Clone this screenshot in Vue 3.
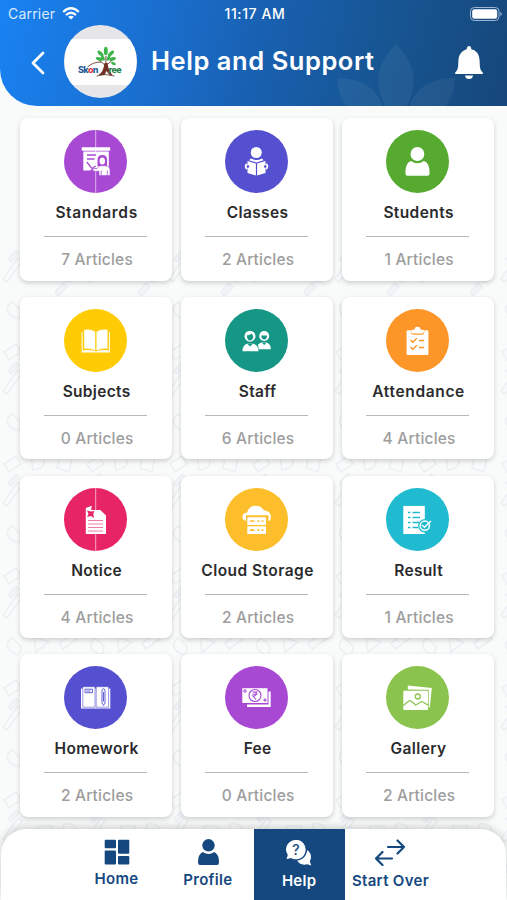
<script setup>
const topics = [
  { name: 'Standards', count: 7, color: '#a849d4', icon: 'standards', track: 0.65, split: true },
  { name: 'Classes', count: 2, color: '#5550d0', icon: 'classes', track: 0.35 },
  { name: 'Students', count: 1, color: '#56aa30', icon: 'students', track: 0.4 },
  { name: 'Subjects', count: 0, color: '#ffcb05', icon: 'subjects', track: 0.3 },
  { name: 'Staff', count: 6, color: '#169685', icon: 'staff', track: 0.35 },
  { name: 'Attendance', count: 4, color: '#fd9629', icon: 'attendance', track: 0.65 },
  { name: 'Notice', count: 4, color: '#e72566', icon: 'notice', track: 0.3, split: true },
  { name: 'Cloud Storage', count: 2, color: '#fcbf2b', icon: 'cloud', track: 0.45 },
  { name: 'Result', count: 1, color: '#20bbd0', icon: 'result', track: 0.3 },
  { name: 'Homework', count: 2, color: '#5550d0', icon: 'homework', track: 0.35 },
  { name: 'Fee', count: 0, color: '#a849d4', icon: 'fee', track: 0.3 },
  { name: 'Gallery', count: 2, color: '#8bc34f', icon: 'gallery', track: 0.4 },
]
</script>

<template>
  <div class="screen">
    <svg class="doodles" viewBox="0 0 507 900" aria-hidden="true">
      <defs>
        <pattern id="doodle" width="83" height="112" patternUnits="userSpaceOnUse">
          <g fill="none" stroke="#dfe6ee" stroke-width="1.6" opacity=".5">
            <path d="M4 16l12-8 5 8-12 8zM31 8q8-8 12 2t-10 12zM60 6l12 4-3 14-12-4zM3 55l15-21 4 3L7 58zM38 42h14v12H38zM64 40q14-2 12 10t-14 5zM12 78q-9 7 0 14t9-6zM34 77l15 5-13 10zM59 83l14-10 4 6-14 10zM30 103h12M58 102q6-8 12 0" />
            <path fill="#e9eff5" d="M8 35l8-9 3 3-8 9zM55 68l8-9 4 4-9 9zM47 102l5-8 3 8z" />
          </g>
        </pattern>
      </defs>
      <rect y="250" width="507" height="650" fill="url(#doodle)" />
    </svg>

    <header class="top">
      <svg class="lotus" viewBox="0 0 120 62" aria-hidden="true">
        <path d="M60 0C40 20 36 43 52 66h16C84 43 80 20 60 0zM1 34c24 0 41 10 47 32H14C5 58 2 48 1 34zM119 34c-24 0-41 10-47 32h34c9-8 12-18 13-32z" />
      </svg>
      <div class="status">
        <div class="carrier">
          <span>Carrier</span>
          <svg width="18" height="13" viewBox="0 0 18 13" fill="none" stroke="#fff" stroke-width="2.3">
            <path d="M1.2 5Q9-2.4 16.8 5M4 8Q9 3.6 14 8" />
            <path d="M9 12.5L6.1 9.8Q9 7.6 11.9 9.8z" fill="#fff" stroke="none" />
          </svg>
        </div>
        <span class="clock">11:17 AM</span>
        <svg class="battery" width="32" height="14" viewBox="0 0 32 14">
          <rect x=".5" y=".5" width="28.5" height="13" rx="3.8" fill="none" stroke="#9db6d3" />
          <rect x="2.2" y="2.2" width="25" height="9.6" rx="2.2" fill="#fff" />
          <path d="M30.3 5v4q1.4-.5 1.4-2t-1.4-2z" fill="#9db6d3" />
        </svg>
      </div>
      <div class="bar">
        <svg class="back" width="14" height="24" viewBox="0 0 14 24" fill="none" stroke="#fff" stroke-width="2.8" stroke-linecap="round" stroke-linejoin="round">
          <path d="M12 2L2 12l10 10" />
        </svg>
        <div class="logo">
          <svg width="72" height="46" viewBox="0 0 72 46">
            <rect width="72" height="46" fill="#fff" />
            <g fill="#3db54a">
              <ellipse cx="41.3" cy="12" rx="2" ry="4.3" />
              <ellipse cx="36" cy="14.5" rx="1.8" ry="3.8" transform="rotate(-45 36 14.5)" />
              <ellipse cx="46.5" cy="14.5" rx="1.8" ry="3.8" transform="rotate(45 46.5 14.5)" />
              <ellipse cx="34.8" cy="20" rx="1.7" ry="3.5" transform="rotate(-75 34.8 20)" />
              <ellipse cx="48" cy="20" rx="1.7" ry="3.5" transform="rotate(75 48 20)" />
              <ellipse cx="38.5" cy="19" rx="1.5" ry="3" transform="rotate(-30 38.5 19)" />
              <ellipse cx="44" cy="19" rx="1.5" ry="3" transform="rotate(30 44 19)" />
              <ellipse cx="49" cy="24.5" rx="1.4" ry="2.6" transform="rotate(115 49 24.5)" />
            </g>
            <path d="M41.4 17v8M35.5 22l5 4M47 22l-5 4M23 28q5-5 14-5" fill="none" stroke="#76503f" />
            <path d="M40 24h3q1 8 5 12h-3l-3-4-2 4h-6q5-3 6-12z" fill="#733126" />
            <text y="33.500" font-family="Inter, sans-serif" font-size="9" font-weight="800" letter-spacing="-.6" fill="#245b98"><tspan x="13.500">Sk</tspan><tspan fill="#e63b43">o</tspan><tspan>n</tspan><tspan x="44" fill="#27824b">ree</tspan></text>
            <path d="M32 37q8-3 18 0" fill="none" stroke="#5b352c" stroke-width=".8" />
          </svg>
        </div>
        <h1>Help and Support</h1>
        <svg class="bell" width="28" height="34" viewBox="0 0 28 34" fill="#fff">
          <path d="M14 0q2 0 2.3 3.2Q24 5 24.6 14c.2 8 .4 10 3.2 12.4V28H.2v-1.600C3 24 3.200 22 3.400 14 4 5 11.700 3.200 11.700 3.200Q12 0 14 0zM10 29.500h8Q17.500 33 14 33t-4-3.500z" />
        </svg>
      </div>
    </header>

    <main class="grid">
      <article v-for="t in topics" :key="t.name" class="card">
        <svg class="disc" viewBox="0 0 63 63" fill="#fff">
          <circle cx="31.500" cy="31.500" r="31.500" :fill="t.color" />
          <path v-if="t.split" d="M31.700 0v63" stroke="#fff" stroke-width=".8" opacity=".75" />
          <g v-if="t.icon === 'standards'">
            <rect x="17.700" y="17.300" width="28.500" height="3.400" rx=".8" />
            <path d="M19.300 21.500h25.500V38h-15l-4 2.500h-6.500z" />
            <path d="M23 25h9M23 29h7.500M22.800 32l5 6.500 4-2.500" fill="none" :stroke="t.color" stroke-width="1.300" />
            <path d="M33.500 36v-6q0-5 4.800-5t4.800 5v6z" :fill="t.color" />
            <ellipse cx="38.300" cy="31" rx="2.700" ry="3.600" />
            <path d="M28.500 38.500h4.500q1-2.500 4-2.800h4q5 .3 5 4.800v5H35v-4.300h-5.500z" stroke-width=".6" :stroke="t.color" />
            <path d="M37.300 40.500v5M43.300 40.500v5" fill="none" :stroke="t.color" stroke-width=".8" />
          </g>
          <g v-else-if="t.icon === 'classes'">
            <circle cx="31.300" cy="22.500" r="5.500" />
            <path d="M26 28.500q5 3 11 0l1.500 1.800-7 2.200-7.500-2.200z" />
            <path d="M22.500 31l8.400 2.500V45.500l-8.400-2.500zM40.500 31l-8.400 2.500V45.500l8.400-2.500z" />
            <path d="M22 34q-2.500 2.500 0 5M41 34q2.500 2.500 0 5" fill="none" stroke="#fff" stroke-width="2" />
            <circle cx="23" cy="36.500" r="1.300" :fill="t.color" /><circle cx="40.200" cy="36.500" r="1.300" :fill="t.color" />
          </g>
          <g v-else-if="t.icon === 'students'">
            <circle cx="31.400" cy="24" r="6.900" />
            <path d="M25 31q6.500 4.500 12.800 0 5.800 1.500 5.800 12.500 0 2.200-2.200 2.200H21.600q-2.200 0-2.200-2.200Q19.400 32.500 25 31z" />
          </g>
          <g v-else-if="t.icon === 'subjects'">
            <path d="M17.600 23v20.400h28.300V23h-1v18.500q-6.500-1.300-13 1-6.500-2.300-13.300-1V23z" />
            <path d="M20.200 20.800q6.400-1 11 2V41.500q-4.600-2.500-11-1.800zM43.500 20.800q-6.400-1-11 2V41.500q4.600-2.500 11-1.800z" />
          </g>
          <g v-else-if="t.icon === 'staff'">
            <circle cx="25" cy="27.200" r="5.500" />
            <path d="M17.500 42.200q0-6 4.500-7.500h6q5.500 1.500 5.500 7.500z" />
            <path d="M21.800 26.500q3.500-.5 5-2l1.500 3q-.5 4-3.300 4t-3.200-5M22.500 35l2.500 2.500 2.500-2.500" :fill="t.color" />
            <circle cx="39.200" cy="27" r="5" />
            <path d="M33.600 40.200h12.200q.2-5-4.200-6.700h-5q-2.500.7-3.800 2.500 1 2 .8 4.200z" />
            <path d="M36.300 26.500h5.800q-.2 4-2.900 4t-2.900-4M37 33.700l2.200 2.400 2.200-2.400" :fill="t.color" />
          </g>
          <g v-else-if="t.icon === 'attendance'">
            <path d="M21.800 21.200h3q-.5 4.500 3 4.500h7.500q3.500 0 3-4.500h2.900q1.200 0 1.200 1.200v22.400q0 1.200-1.200 1.200H21.800q-1.200 0-1.200-1.200V22.400q0-1.200 1.200-1.200z" />
            <path d="M26 20.800h2.500q0-3 3-3t3 3H37q1 0 1 1.400 0 2.300-2 2.300h-9q-2 0-2-2.300 0-1.400 1-1.400z" />
            <path d="M24.500 31l2.300 2.300 4-4M33 31.500h5M24.500 38l2.300 2.300 4-4M33 38.500h5" fill="none" :stroke="t.color" stroke-width="1.500" />
          </g>
          <g v-else-if="t.icon === 'notice'">
            <path d="M21.800 22h14.500l5.700 5.500V46H21.800z" />
            <path d="M24 32.500h15M24 36h15M24 39.500h15M24 43h15" fill="none" :stroke="t.color" stroke-width=".6" />
            <path d="M23 22.500l4 1 3.500-.5-1.200 2.700.7 4.300-3-2-4 1 1.500-3z" :fill="t.color" />
            <path d="M21.800 20l6-2.300-.6 4.300h-5.400z" />
          </g>
          <g v-else-if="t.icon === 'cloud'">
            <path d="M21 33q-4-1.200-3.600-4.600.5-3.400 4.700-4 2-6.700 8.300-6.700 6 0 8.300 4.500Q46 23 46 29q0 3-2.500 4.200v-6H21z" />
            <rect x="22.300" y="29.200" width="18.700" height="7.800" rx=".6" />
            <rect x="22.300" y="38.300" width="18.700" height="7.700" rx=".6" />
            <path d="M25 33h4.500M32.500 33h2M36.500 33h2M25 42.200h4.500M32.500 42.200h2M36.500 42.200h2" fill="none" :stroke="t.color" stroke-width="1.700" />
          </g>
          <g v-else-if="t.icon === 'result'">
            <path d="M17.300 17.900h21.500V46H17.300z" />
            <path d="M22 24.500h2.500M26.500 24.500H34M22 29.500h2.500M26.500 29.500H34M22 34.500h2.500M26.500 34.500H33M22 39.500h2.500M26.500 39.500H32" fill="none" :stroke="t.color" stroke-width="1.500" />
            <circle cx="38.800" cy="37.700" r="6.700" :fill="t.color" />
            <circle cx="38.800" cy="37.700" r="4.600" fill="none" stroke="#fff" stroke-width="1.500" />
            <path d="M36 37l2.500 2.200L45 33" fill="none" stroke="#fff" stroke-width="1.500" />
          </g>
          <g v-else-if="t.icon === 'homework'">
            <path d="M17 22.500h29.300v20H17z" />
            <path d="M18.800 20.700H31v20.500H18.800zM32.200 20.700h12.400v20.500H32.200z" :stroke="t.color" stroke-width=".6" />
            <path d="M21 23.200h7.500v3.500H21zM38 24.500q1.500-4 3 0V37l-1.500 2.500L38 37zM39.500 26v9.500" fill="none" :stroke="t.color" stroke-width=".9" />
            <path d="M22.500 25h4" :stroke="t.color" stroke-width=".9" />
          </g>
          <g v-else-if="t.icon === 'fee'">
            <path d="M17.300 22.200h25.200V37H17.300z" />
            <path d="M43.500 25.500h2.200V41H22v-2.500h21.500z" />
            <g fill="none" :stroke="t.color" stroke-width="1.100">
              <circle cx="30" cy="29.500" r="6" /><circle cx="20" cy="25" r="1.200" /><circle cx="40" cy="34" r="1" />
              <path d="M27.500 26h5M27.500 28.300h5M28 26q5 0 2.500 3.300-1 .9-2.500.7l3 3.500" />
            </g>
          </g>
          <g v-else>
            <path d="M21.800 19.500l24 2.500-2 19.500-1 0V23.700l-21-.2z" />
            <rect x="17.300" y="24.700" width="24.800" height="19.400" rx="1" />
            <path d="M17.300 39.500l5.500-4.500q1-.7 2 0l5 4 5-3q1.200-.6 2 .1l5.500 3" fill="none" :stroke="t.color" stroke-width="1.200" />
            <circle cx="31.800" cy="30.500" r="2.500" fill="none" :stroke="t.color" stroke-width="1.300" />
          </g>
        </svg>
        <h2 :style="{ letterSpacing: t.track + 'px' }">{{ t.name }}</h2>
        <hr />
        <p>{{ t.count }} Articles</p>
      </article>
    </main>

    <nav class="tabs">
      <a class="tab">
        <svg width="26" height="26" viewBox="0 0 26 26" fill="currentColor">
          <rect x=".7" y=".7" width="11.300" height="8.500" rx="1" /><rect x="14" y=".7" width="11.300" height="14" rx="1" />
          <rect x=".7" y="11.400" width="11.300" height="14" rx="1" /><rect x="14" y="17" width="11.300" height="8.400" rx="1" />
        </svg>
        <span class="home">Home</span>
      </a>
      <a class="tab">
        <svg width="26" height="26" viewBox="0 0 26 26" fill="currentColor">
          <circle cx="13.500" cy="6.300" r="6.200" />
          <path d="M7.800 13q5.700 4 11.400 0 4.800 2 4.800 10.500 0 2.500-2 2.500H5q-2 0-2-2.500Q3 15 7.800 13z" />
        </svg>
        <span>Profile</span>
      </a>
      <a class="tab active">
        <svg width="28" height="27" viewBox="0 0 28 27">
          <path d="M15 10q10.500-1 11 8 0 2.500-1.200 4.500l1.500 4-4-1.200Q14 27 11.500 20z" fill="#fff" />
          <path d="M11 0a10.500 10.500 0 1 1-5 19.800L.5 21.300 2 16Q-.3 12.500.5 8.700 2 1 11 0z" fill="#fff" stroke="#15487f" stroke-width="1.500" />
          <text x="11" y="15.500" text-anchor="middle" font-family="Inter, sans-serif" font-size="14" font-weight="500" fill="#15487f">?</text>
        </svg>
        <span>Help</span>
      </a>
      <a class="tab">
        <svg width="32" height="27" viewBox="0 0 32 27" fill="none" stroke="currentColor" stroke-width="2.200" stroke-linecap="round" stroke-linejoin="round">
          <path d="M14 8h16M23.500 1.500L30 8l-6.500 6.500M18 19.500H2M8.500 13L2 19.500 8.500 26" />
        </svg>
        <span>Start Over</span>
      </a>
    </nav>
  </div>
</template>

<style>
body { overflow: hidden; }
</style>

<style scoped>
* { box-sizing: border-box; }
.screen {
  position: relative;
  display: flex;
  flex-direction: column;
  width: 507px;
  height: 900px;
  overflow: hidden;
  background: #f9fafa;
  font-family: Inter, "Noto Sans", sans-serif;
}
.doodles { position: absolute; inset: 0; width: 507px; height: 900px; }
.top {
  position: relative;
  flex: none;
  height: 106px;
  color: #fff;
  overflow: hidden;
  border-bottom-left-radius: 37px;
  background: linear-gradient(103deg, #1982f2 0%, #1a6fcf 30%, #185fae 53%, #175693 74%, #16477a 100%);
}
.lotus { position: absolute; left: 336px; top: 44px; width: 120px; height: 62px; fill: #fff; opacity: .05; }
.status {
  display: grid;
  grid-template-columns: 1fr auto 1fr;
  align-items: center;
  height: 27px;
  padding: 0 5px 0 8px;
  font-size: 14px;
}
.carrier { display: flex; align-items: center; gap: 7px; color: #dbeafd; letter-spacing: .2px; }
.clock { font-weight: 500; font-size: 14px; letter-spacing: .6px; }
.battery { justify-self: end; }
.bar { display: flex; align-items: center; height: 71px; padding: 0 24px 0 31px; position: relative; }
.back { flex: none; margin-right: 19px; }
.logo {
  display: flex;
  align-items: center;
  width: 73px;
  height: 73px;
  margin-top: -2px;
  border-radius: 50%;
  overflow: hidden;
  background: #e6e6e8;
  flex: none;
}
.logo svg { width: 73px; }
h1 { margin: -3px 0 0 14px; font-size: 25.500px; font-weight: 600; line-height: 32px; letter-spacing: .550px; white-space: nowrap; }
.bell { flex: none; margin-left: auto; }
.grid {
  position: relative;
  display: grid;
  grid-template-columns: repeat(3, 152px);
  grid-auto-rows: 162.500px;
  column-gap: 9px;
  row-gap: 16.300px;
  padding: 12px 0 0 19.600px;
}
.card {
  display: flex;
  flex-direction: column;
  align-items: center;
  padding: 12px 0 0;
  border-radius: 8px;
  background: #fff;
  box-shadow: 0 2px 5px rgba(0, 0, 0, .18);
}
.disc { width: 63px; height: 63px; flex: none; }
h2 { margin: 8px 0 0 2px; font-size: 15.500px; line-height: 24px; font-weight: 600; color: #2b2b2d; white-space: nowrap; }
hr { width: 103px; height: 1px; margin: 11px 0 0; border: 0; background: #b7b7b7; flex: none; }
p { margin: 11px 0 0 3px; font-size: 15.500px; line-height: 24px; font-weight: 500; color: #9d9d9d; letter-spacing: .2px; }
.tabs {
  position: absolute;
  left: 1px;
  right: 1px;
  bottom: 0;
  height: 71px;
  display: flex;
  justify-content: center;
  border-radius: 25px 25px 0 0;
  background: #fff;
  box-shadow: 0 -2px 8px rgba(0, 0, 0, .18);
  color: #15487f;
}
.tab { width: 91.300px; display: flex; flex-direction: column; align-items: center; padding-top: 10px; }
.tab svg { flex: none; }
.tab span { font-size: 15px; font-weight: 600; line-height: 22px; margin-top: 4px; letter-spacing: .300px; white-space: nowrap; }
.tab .home { margin-top: 3px; }
.active { background: #15487f; color: #fff; }
</style>
